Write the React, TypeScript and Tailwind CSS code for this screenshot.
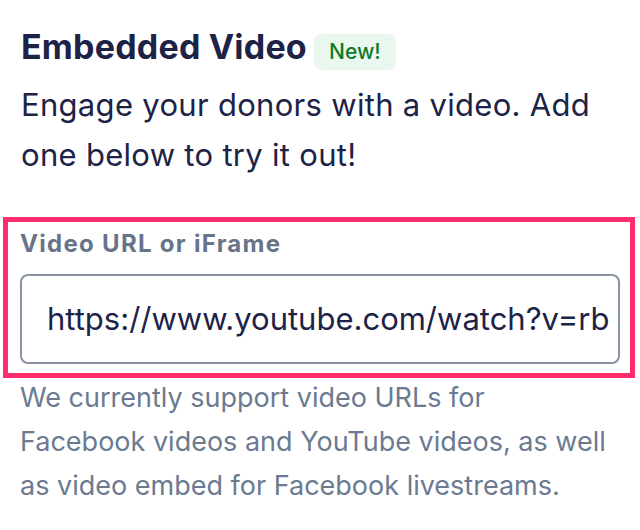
export default function App() {
  return (
    <div
      className="w-[640px] h-[530px] bg-white overflow-hidden"
      style={{ fontFamily: "Inter, 'Noto Sans', sans-serif" }}
    >
      <div className="pl-[21px] pt-[25px]">
        <div className="flex items-baseline h-[44px]">
          <h1 className="text-[34px] leading-[44px] font-bold text-[#1d2347] tracking-[0.2px]">Embedded Video</h1>
          <span className="ml-[7px] w-[82px] h-[36px] inline-flex items-center justify-center rounded-[8px] bg-[#e9f7ee] text-[#117a26] text-[21px] leading-[36px] font-medium">
            New!
          </span>
        </div>
        <p className="mt-[11px] text-[31px] leading-[50px] text-[#1d2347] tracking-[0.3px]">
          Engage your donors with a video. Add
          <br />
          one below to try it out!
        </p>
      </div>
      <div className="mt-[37px] mx-[3px] w-[632px] border-[5px] border-[#ff2d6b] pl-[12px] pr-[10px] pt-[8px] pb-[9px]">
        <label className="block text-[24px] font-bold text-[#667388] leading-[28px] tracking-[1.3px]">
          Video URL or iFrame
        </label>
        <div className="mt-[16px] h-[90px] border-2 border-[#8793a5] rounded-[8px] flex items-center pl-[25px] overflow-hidden">
          <span className="text-[31px] text-[#1d2347] whitespace-nowrap">https://www.youtube.com/watch?v=rb</span>
        </div>
      </div>
      <p className="pl-[20px] mt-[-2px] text-[27px] leading-[44px] text-[#6b7a91]">
        We currently support video URLs for
        <br />
        Facebook videos and YouTube videos, as well
        <br />
        as video embed for Facebook livestreams.
      </p>
    </div>
  );
}
